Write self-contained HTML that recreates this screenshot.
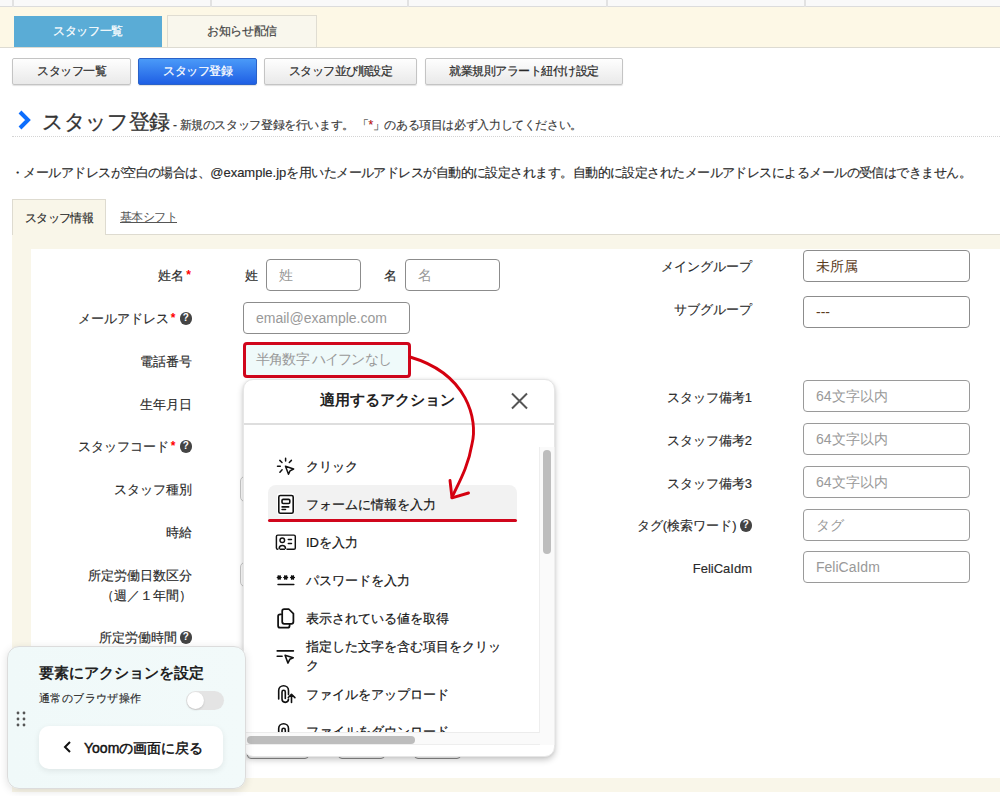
<!DOCTYPE html>
<html><head><meta charset="utf-8">
<style>
*{box-sizing:border-box;margin:0;padding:0}
html,body{width:1000px;height:796px;overflow:hidden;background:#fff;font-family:"Liberation Sans",sans-serif;color:#333}
.a{position:absolute}
.topstrip{left:0;top:0;width:1000px;height:7px;background:#f9f9f9;border-bottom:1px solid #dcdcdc}
.sep{top:0;width:2px;height:7px;background:#e2e2e2}
.band{left:0;top:7px;width:1000px;height:41px;background:#fdf8e6;border-bottom:1px solid #dddbd2}
.tab1{left:14px;top:16px;width:148px;height:31px;letter-spacing:-.3px;background:#5aacd6;color:#fff;font-size:12px;-webkit-text-stroke:.2px #fff;text-align:center;line-height:31px}
.tab2{left:167px;top:15px;width:150px;height:32px;letter-spacing:-.4px;background:#f9f7ed;border:1px solid #e0ddd2;border-bottom:none;color:#444;font-size:12px;-webkit-text-stroke:.2px #444;text-align:center;line-height:31px}
.btn{top:58px;height:27px;letter-spacing:-.5px;border:1px solid #c4c4c4;border-radius:2px;background:linear-gradient(#fefefe,#e9e9e9);color:#2a2a2a;font-size:12px;-webkit-text-stroke:.2px #2a2a2a;text-align:center;line-height:25px;box-shadow:0 1px 1px rgba(0,0,0,.12)}
.btn.blue{background:linear-gradient(#4a9af8,#1f5fe4);border-color:#2a62c8;color:#fff;-webkit-text-stroke:.2px #fff}
.h1{left:42px;top:109px;font-size:21px;letter-spacing:-.35px;color:#333;-webkit-text-stroke:.3px #333;white-space:nowrap;line-height:26px}
.sub{left:173px;top:117px;font-size:12px;letter-spacing:-.38px;color:#3a3a3a;-webkit-text-stroke:.15px #3a3a3a;white-space:nowrap;line-height:16px}
.dots{left:12px;top:136px;width:988px;height:1px;border-top:1px dotted #d4d4d4}
.notice{left:11px;top:164px;font-size:13px;letter-spacing:-.55px;color:#2a2a2a;-webkit-text-stroke:.15px #2a2a2a;white-space:nowrap;line-height:18px}
.t1{left:12px;top:199px;width:94px;height:36px;background:#f9f6e9;border:1px solid #dedbd0;border-bottom:none;font-size:12px;letter-spacing:-.6px;color:#2a2a2a;-webkit-text-stroke:.15px #2a2a2a;text-align:center;line-height:36px}
.t2{left:120px;top:209px;font-size:12px;letter-spacing:-.6px;color:#555;text-decoration:underline;line-height:16px}
.panel{left:12px;top:234px;width:988px;height:558px;background:#f9f6e9;border-top:1px solid #dedbd0}
.inner{left:31px;top:249px;width:969px;height:529px;background:#fff}
.lbl{font-size:13px;color:#2a2a2a;-webkit-text-stroke:.15px #2a2a2a;white-space:nowrap;text-align:right;line-height:18px}
.req{color:#f00;font-size:12px;font-weight:bold;-webkit-text-stroke:0;vertical-align:top;position:relative;top:-1px;margin-left:2px;margin-right:1px}
.q{display:inline-block;width:12.5px;height:12.5px;border-radius:50%;background:#444;color:#fff;-webkit-text-stroke:0;font-size:10px;font-weight:bold;line-height:12.5px;text-align:center;vertical-align:2px;margin-left:3px}
.inp{height:32px;border:1.3px solid #8c8c8c;border-radius:4px;background:#fff;font-size:14px;color:#999;padding-left:12px;line-height:30px;white-space:nowrap}
.inp.l{border-color:#9a9a9a}

.pop{left:243px;top:378.5px;width:312px;height:378.5px;background:#fff;border:1px solid #e6e6e6;border-radius:10px;box-shadow:0 3px 6px rgba(0,0,0,.22),0 0 3px rgba(0,0,0,.06)}
.poptitle{left:243px;top:390px;width:288px;text-align:center;font-size:15px;font-weight:bold;color:#222;line-height:20px;white-space:nowrap}
.popsep{left:244px;top:423px;width:310px;height:2px;background:#dedede}
.listbox{left:244px;top:447px;width:296px;height:286px;background:#fff;border-right:1px solid #ececec;border-bottom:1px solid #ececec}
.vtrack{left:539px;top:447px;width:16px;height:298px;background:#fafafa;border-left:1px solid #eee;border-right:1px solid #eee}
.vthumb{left:543px;top:450px;width:8px;height:104px;background:#bdbdbd;border-radius:4px}
.htrack{left:244px;top:733px;width:296px;height:12px;background:#fafafa;border-bottom:1px solid #eee}
.hthumb{left:247px;top:736px;width:168px;height:8px;background:#bdbdbd;border-radius:4px}
.hl{left:268px;top:485px;width:249px;height:36px;background:#f2f2f2;border-radius:8px 8px 0 0}
.hlline{left:268px;top:519px;width:249px;height:2.5px;background:#d0061c;border-radius:2px}
.it{left:306px;font-size:13px;color:#151515;-webkit-text-stroke:.2px #151515;line-height:18px;white-space:nowrap}
.clip{left:243px;top:724px;width:296px;height:8px;overflow:hidden}
.clip .it{position:absolute}
.clip2{left:270px;top:720px;width:30px;height:12px;overflow:hidden}
.fp{left:7px;top:646px;width:239px;height:142.5px;background:linear-gradient(90deg,#f0f9f9,#f2fafa);border:1px solid #dcdcdc;border-radius:12px;box-shadow:0 2px 8px rgba(0,0,0,.12)}
.fptitle{left:39px;top:664px;font-size:15px;font-weight:bold;color:#222;line-height:18px;white-space:nowrap}
.fpsub{left:39px;top:691px;font-size:11px;letter-spacing:.4px;color:#2a2a2a;-webkit-text-stroke:.15px #2a2a2a;line-height:14px;white-space:nowrap}
.tog{left:186px;top:691px;width:38px;height:19px;background:#e4e4e4;border-radius:10px}
.knob{left:187px;top:692px;width:17px;height:17px;background:#fff;border-radius:50%;box-shadow:0 1px 2px rgba(0,0,0,.15)}
.fpbtn{left:39px;top:726px;width:184px;height:43px;background:#fff;border-radius:10px;box-shadow:0 2px 6px rgba(0,0,0,.08)}
.fpbtntxt{left:84px;top:739px;font-size:14px;-webkit-text-stroke:.45px #111;color:#111;line-height:18px;white-space:nowrap}
</style></head><body>
<div class="a topstrip"></div>
<div class="a sep" style="left:12px"></div>
<div class="a sep" style="left:210px"></div>
<div class="a sep" style="left:407px"></div>
<div class="a sep" style="left:606px"></div>
<div class="a sep" style="left:804px"></div>
<div class="a band"></div>
<div class="a tab1">スタッフ一覧</div>
<div class="a tab2">お知らせ配信</div>

<div class="a btn" style="left:12px;width:119px">スタッフ一覧</div>
<div class="a btn blue" style="left:138px;width:119px">スタッフ登録</div>
<div class="a btn" style="left:264px;width:153px">スタッフ並び順設定</div>
<div class="a btn" style="left:425px;width:198px">就業規則アラート紐付け設定</div>

<svg class="a" style="left:17px;top:110px" width="14" height="20" viewBox="0 0 14 20"><path d="M3 2 L11 10 L3 18" fill="none" stroke="#0d6efd" stroke-width="4"/></svg>
<div class="a h1">スタッフ登録</div>
<div class="a sub">-&nbsp;新規のスタッフ登録を行います。&nbsp;「<span style="color:#e00">*</span>」のある項目は必ず入力してください。</div>
<div class="a dots"></div>
<div class="a notice">・メールアドレスが空白の場合は、<span style="letter-spacing:0">@example.jp</span>を用いたメールアドレスが自動的に設定されます。自動的に設定されたメールアドレスによるメールの受信はできません。</div>

<div class="a panel"></div>
<div class="a t1">スタッフ情報</div>
<div class="a t2">基本シフト</div>
<div class="a inner"></div>

<!-- left labels -->
<div class="a lbl" style="right:808px;top:267px">姓名<span class="req">*</span></div>
<div class="a lbl" style="right:808px;top:310px">メールアドレス<span class="req">*</span><span class="q">?</span></div>
<div class="a lbl" style="right:808px;top:353px">電話番号</div>
<div class="a lbl" style="right:808px;top:396px">生年月日</div>
<div class="a lbl" style="right:808px;top:438px">スタッフコード<span class="req">*</span><span class="q">?</span></div>
<div class="a lbl" style="right:808px;top:481px">スタッフ種別</div>
<div class="a lbl" style="right:808px;top:524px">時給</div>
<div class="a lbl" style="right:808px;top:566px;line-height:20px">所定労働日数区分<br>（週／１年間）</div>
<div class="a lbl" style="right:808px;top:629px">所定労働時間<span class="q">?</span></div>

<div class="a lbl" style="left:245px;top:267px">姓</div>
<div class="a inp" style="left:266px;top:259px;width:95px">姓</div>
<div class="a lbl" style="left:384px;top:267px">名</div>
<div class="a inp" style="left:405px;top:259px;width:95px">名</div>
<div class="a inp" style="left:243px;top:302px;width:167px">email@example.com</div>
<div class="a inp" style="left:240px;top:476px;width:40px;height:25.5px;border:1.5px solid #c8c8c8;border-radius:5px"></div>
<div class="a inp" style="left:240px;top:561.5px;width:40px;height:25.5px;border:1.5px solid #c8c8c8;border-radius:5px"></div>

<!-- right column -->
<div class="a lbl" style="right:248px;top:258px">メイングループ</div>
<div class="a inp" style="left:803px;top:250px;width:167px;color:#5c3d1e">未所属</div>
<div class="a lbl" style="right:248px;top:301px">サブグループ</div>
<div class="a inp" style="left:803px;top:296px;width:167px;color:#5c3d1e">---</div>
<div class="a lbl" style="right:248px;top:389px">スタッフ備考1</div>
<div class="a inp l" style="left:803px;top:380px;width:167px">64文字以内</div>
<div class="a lbl" style="right:248px;top:432px">スタッフ備考2</div>
<div class="a inp l" style="left:803px;top:423px;width:167px">64文字以内</div>
<div class="a lbl" style="right:248px;top:475px">スタッフ備考3</div>
<div class="a inp l" style="left:803px;top:466px;width:167px">64文字以内</div>
<div class="a lbl" style="right:248px;top:517px">タグ(検索ワード)<span class="q">?</span></div>
<div class="a inp l" style="left:803px;top:509px;width:167px">タグ</div>
<div class="a lbl" style="right:248px;top:560px">FeliCaIdm</div>
<div class="a inp l" style="left:803px;top:551px;width:167px">FeliCaIdm</div>

<!-- phone highlighted -->
<div class="a inp" style="left:243px;top:342px;width:167.5px;height:35.5px;border:3px solid #d0061c;background:#effafa;padding-left:10px;line-height:29px;letter-spacing:-.8px">半角数字 ハイフンなし</div>


<div class="a inp" style="left:247px;top:729px;width:62px;height:29.5px"></div>
<div class="a inp" style="left:338px;top:729px;width:47px;height:29.5px"></div>
<div class="a inp" style="left:414px;top:729px;width:47px;height:29.5px"></div>
<!-- popup -->
<div class="a pop"></div>
<div class="a poptitle">適用するアクション</div>
<svg class="a" style="left:510px;top:392px" width="19" height="18" viewBox="0 0 19 18"><path d="M2 1.5 L17 16.5 M17 1.5 L2 16.5" stroke="#555" stroke-width="2" fill="none"/></svg>
<div class="a popsep"></div>
<div class="a listbox"></div>
<div class="a vtrack"></div>
<div class="a vthumb"></div>
<div class="a htrack"></div>
<div class="a hthumb"></div>
<div class="a hl"></div>
<div class="a hlline"></div>
<div class="a it" style="top:458px">クリック</div>
<div class="a it" style="top:496px">フォームに情報を入力</div>
<div class="a it" style="top:534px">IDを入力</div>
<div class="a it" style="top:572px">パスワードを入力</div>
<div class="a it" style="top:610px">表示されている値を取得</div>
<div class="a it" style="top:637px;line-height:19px">指定した文字を含む項目をクリッ<br>ク</div>
<div class="a it" style="top:686px">ファイルをアップロード</div>
<div class="a clip"><div class="a it" style="left:63px;top:-1px">ファイルをダウンロード</div></div>
<!-- icons -->
<svg class="a" style="left:270px;top:452px" width="30" height="30" viewBox="0 0 30 30" fill="none" stroke="#111" stroke-width="1.5" stroke-linecap="round" stroke-linejoin="round">
<path d="M15.6 6.2 V8.9 M9.8 8.4 L12 10.5 M21.4 8.4 L19.3 10.5 M7.5 14.2 H10.3 M9.9 20.2 L12.1 17.8"/>
<path d="M15.5 14.3 L23.6 17 L20 18.9 L18.5 22.3 Z"/>
</svg>
<svg class="a" style="left:270px;top:490px" width="30" height="30" viewBox="0 0 30 30" fill="none" stroke="#111" stroke-width="1.6" stroke-linecap="round" stroke-linejoin="round">
<rect x="7" y="3" width="17.5" height="22.3" rx="3" fill="#fff" stroke="none"/>
<rect x="8.8" y="5.5" width="14.4" height="17.8" rx="1.6"/>
<rect x="12" y="9.4" width="7.8" height="4.1" rx="1.2"/>
<path d="M12.1 16.9 H18.7 M12.1 19.5 H15.5"/>
</svg>
<svg class="a" style="left:270px;top:527px" width="30" height="30" viewBox="0 0 30 30" fill="none" stroke="#111" stroke-width="1.45" stroke-linecap="round" stroke-linejoin="round">
<path d="M7.8 22.3 A1.4 1.4 0 0 1 6.4 20.9 V9.5 A1.4 1.4 0 0 1 7.8 8.1 H23.9 A1.4 1.4 0 0 1 25.3 9.5 V20.9 A1.4 1.4 0 0 1 23.9 22.3 H17"/>
<circle cx="12.3" cy="13.2" r="2.3"/>
<path d="M9.1 21.3 A3.3 3.3 0 0 1 15.6 21.3 M10.2 22.3 H14.5"/>
<path d="M18.3 12.4 H21.5 M18.3 16.4 H21.5"/>
</svg>
<svg class="a" style="left:270px;top:565px" width="30" height="30" viewBox="0 0 30 30" fill="#111" stroke="#111" stroke-width="1.6" stroke-linecap="round">
<circle cx="9.2" cy="12.5" r="2" stroke="none"/><circle cx="15.7" cy="12.5" r="2" stroke="none"/><circle cx="22.5" cy="12.5" r="2" stroke="none"/>
<path d="M7.2 12.5 H11.2 M8.2 10.8 L10.2 14.2 M10.2 10.8 L8.2 14.2 M13.7 12.5 H17.7 M14.7 10.8 L16.7 14.2 M16.7 10.8 L14.7 14.2 M20.5 12.5 H24.5 M21.5 10.8 L23.5 14.2 M23.5 10.8 L21.5 14.2" stroke-width="1.2"/>
<path d="M8 19.4 H23.8" fill="none" stroke-width="1.5"/>
</svg>
<svg class="a" style="left:270px;top:603px" width="30" height="30" viewBox="0 0 30 30" fill="none" stroke="#111" stroke-width="1.75" stroke-linecap="round" stroke-linejoin="round">
<path d="M14.2 6 H18.7 L23.4 10.7 V18.8 A2 2 0 0 1 21.4 20.8 H14.2 A2 2 0 0 1 12.2 18.8 V8 A2 2 0 0 1 14.2 6 Z"/>
<path d="M11.2 11.3 H10.1 A2 2 0 0 0 8.1 13.3 V22.7 A2 2 0 0 0 10.1 24.7 H17.6 A2 2 0 0 0 19.6 22.7 V21.6"/>
</svg>
<svg class="a" style="left:270px;top:640px" width="30" height="30" viewBox="0 0 30 30" fill="none" stroke="#111" stroke-width="1.6" stroke-linecap="round" stroke-linejoin="round">
<path d="M7.2 10.9 H23.4 M7.2 16.3 H12.1"/>
<path d="M15.1 15.2 L23.2 17.7 L19.8 19.3 L17.9 23.1 Z"/>
</svg>
<svg class="a" style="left:270px;top:680px" width="30" height="30" viewBox="0 0 30 30" fill="none" stroke="#111" stroke-width="1.6" stroke-linecap="round" stroke-linejoin="round">
<path d="M8.7 19 V10.6 A4.9 4.9 0 0 1 18.5 10.6 V14.6"/>
<path d="M15.3 18.4 V11.9 A1.65 1.65 0 0 0 12 11.9 V19.1 A3.25 3.25 0 0 0 18.5 19.1 V19"/>
<path d="M21.5 22.4 V14.5 M18.3 17.5 L21.5 14.3 L24.9 17.6"/>
</svg>
<div class="a clip2"><svg class="a" style="left:0px;top:-2px" width="30" height="30" viewBox="0 0 30 30" fill="none" stroke="#111" stroke-width="1.6" stroke-linecap="round">
<path d="M8.7 19 V10.6 A4.9 4.9 0 0 1 18.5 10.6 V14.6"/>
<path d="M15.3 18.4 V11.9 A1.65 1.65 0 0 0 12 11.9 V19.1"/>
</svg></div>

<!-- arrow -->
<svg class="a" style="left:0;top:0" width="1000" height="796" viewBox="0 0 1000 796" fill="none" stroke="#d4000f" stroke-width="2.9" stroke-linecap="round" stroke-linejoin="round">
<path d="M410 357 C 468 374, 478 420, 472 444 C 468 468, 458 484, 452 497.5"/>
<path d="M450 480.5 L452 497.8 L468.5 493"/>
</svg>

<!-- floating panel -->
<div class="a fp"></div>
<div class="a fptitle">要素にアクションを設定</div>
<div class="a fpsub">通常のブラウザ操作</div>
<div class="a tog"></div>
<div class="a knob"></div>
<svg class="a" style="left:15px;top:710px" width="12" height="18" viewBox="0 0 12 18" fill="#555">
<circle cx="3" cy="3" r="1.4"/><circle cx="9" cy="3" r="1.4"/><circle cx="3" cy="9" r="1.4"/><circle cx="9" cy="9" r="1.4"/><circle cx="3" cy="15" r="1.4"/><circle cx="9" cy="15" r="1.4"/>
</svg>
<div class="a fpbtn"></div>
<svg class="a" style="left:63px;top:740px" width="10" height="14" viewBox="0 0 10 14" fill="none" stroke="#111" stroke-width="2"><path d="M7 2 L2 7 L7 12"/></svg>
<div class="a fpbtntxt">Yoomの画面に戻る</div>
</body></html>
